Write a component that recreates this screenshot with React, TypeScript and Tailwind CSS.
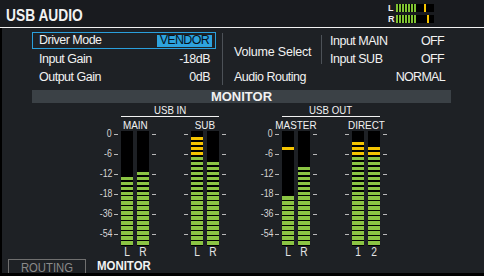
const segs = Array.from({ length: 23 }, (_, i) => i);
const scale = ["0", "-6", "-12", "-18", "-36", "-54"];

type Level = { from: number; peak?: number };

const Bar = ({ from, peak }: Level) => (
  <div className="flex h-[115px] w-[12px] flex-col bg-black pt-[0.7px]">
    {segs.map((i) => {
      const lit = i >= from || i === peak;
      const color = !lit ? "bg-black" : i <= 4 ? "bg-[#f5c400]" : "bg-[#8bc443]";
      return <div key={i} className={`mb-[1.6px] h-[3.4px] shrink-0 ${color}`} />;
    })}
  </div>
);

const Ticks = () => (
  <div className="-mt-[7px] flex flex-col">
    {scale.map((s) => (
      <div key={s} className="h-[20px] w-[4px]">
        <div className="mt-[10px] h-px w-[4px] bg-[#b8b8b8]" />
      </div>
    ))}
  </div>
);

type PairProps = { name: string; chans: string[]; levels: Level[] };

const Pair = ({ name, chans, levels }: PairProps) => (
  <div className="flex flex-col">
    <div className="ml-[7px] flex h-[12px] w-[28px] justify-center text-[11.5px] leading-[12px] whitespace-nowrap">
      <span className="inline-block scale-x-[0.86]">{name}</span>
    </div>
    <div className="flex">
      <Ticks />
      <div className="ml-[3px] flex gap-[4px]">
        <Bar {...levels[0]} />
        <Bar {...levels[1]} />
      </div>
      <div className="ml-[3px]">
        <Ticks />
      </div>
    </div>
    <div className="ml-[7px] flex gap-[4px] text-[12px] leading-[12px] text-[#e6e6e6]">
      {chans.map((c) => (
        <span key={c} className="inline-block w-[12px] scale-x-[0.85] text-center">
          {c}
        </span>
      ))}
    </div>
  </div>
);

const Group = ({ title, children }: { title: string; children: React.ReactNode }) => (
  <div className="flex">
    <div className="mt-[21px] mr-[2px] flex w-[20px] flex-col text-[10px] text-[#d4d4d4]">
      {scale.map((s) => (
        <div key={s} className="flex h-[20px] justify-end leading-[20px]">
          <span className="inline-block origin-right scale-x-[0.88]">{s}</span>
        </div>
      ))}
    </div>
    <div className="flex flex-col">
      <div className="mx-[7px] mt-px flex h-[13px] justify-center border-b border-[#f2f2f2] text-[11.5px] leading-[12px]">
        <span className="inline-block scale-x-[0.84]">{title}</span>
      </div>
      <div className="mt-[2px] flex gap-[28px]">{children}</div>
    </div>
  </div>
);

const MiniRow = ({ ch, peak }: { ch: string; peak: string }) => (
  <div className="flex h-[8px] items-center">
    <span className="w-[8px] text-[9px] font-bold leading-[8px]">{ch}</span>
    <div className="flex h-[8px] w-[38px] bg-black">
      {[0, 1, 2, 3, 4, 5, 6].map((i) => (
        <div key={i} className="mr-[1px] h-full w-[2px] bg-[#7fc232]" />
      ))}
      <div className={`h-full w-[2px] bg-[#f5c400] ${peak}`} />
    </div>
  </div>
);

const Row = ({ label, value }: { label: string; value: string }) => (
  <div className="flex h-[18px] items-center justify-between pl-[7px] pr-[6px]">
    <span>{label}</span>
    <span className="tracking-[-0.5px]">{value}</span>
  </div>
);

export default function App() {
  return (
    <div className="flex h-[276px] w-[484px] flex-col overflow-hidden bg-[#1e2125] font-['Liberation_Sans',sans-serif] text-[12.5px] text-[#f2f2f2]">
      <div className="flex h-[28px] shrink-0 justify-between border-b border-[#f2f2f2] bg-[#191b1f] pr-[50px]">
        <div className="pt-[7px] pl-[6px] text-[17px] leading-[17px] font-bold">
          <span className="inline-block origin-left scale-x-[0.81] whitespace-nowrap">USB AUDIO</span>
        </div>
        <div className="flex flex-col gap-[3px] pt-[4px]">
          <MiniRow ch="L" peak="ml-[7px]" />
          <MiniRow ch="R" peak="ml-[10px]" />
        </div>
      </div>

      <div className="flex flex-1 flex-col border-l-2 border-black">
        <div className="flex h-[58px] pt-[4px] pl-[30px] tracking-[-0.5px]">
          <div className="flex w-[184px] flex-col">
            <div className="flex h-[17px] items-center justify-between border border-[#2a9fdc] pl-[6px] pr-[3px]">
              <span>Driver Mode</span>
              <span className="flex h-[12px] w-[55px] items-center justify-end bg-[#2ea3de] pr-[3px] tracking-[-0.7px] text-[#07131d]">
                VENDOR
              </span>
            </div>
            <div className="mt-px">
              <Row label="Input Gain" value="-18dB" />
            </div>
            <Row label="Output Gain" value="0dB" />
          </div>
          <div className="mt-px ml-[6px] h-[52px] w-px bg-[#4c5157]" />
          <div className="flex w-[222px] flex-col pl-[11px]">
            <div className="flex h-[36px]">
              <div className="flex w-[87px] items-center pt-[4px] tracking-[-0.2px]">Volume Select</div>
              <div className="mt-[3px] h-[29px] w-px bg-[#4c5157]" />
              <div className="flex w-[122px] flex-col pl-[8px]">
                <div className="flex h-[18px] items-center justify-between">
                  <span>Input MAIN</span>
                  <span className="tracking-[-0.7px]">OFF</span>
                </div>
                <div className="flex h-[18px] items-center justify-between">
                  <span>Input SUB</span>
                  <span className="tracking-[-0.7px]">OFF</span>
                </div>
              </div>
            </div>
            <div className="flex h-[18px] items-center justify-between">
              <span>Audio Routing</span>
              <span className="tracking-[-0.7px]">NORMAL</span>
            </div>
          </div>
        </div>

        <div className="mt-[4px] ml-[30px] flex h-[13px] w-[419px] items-center justify-center bg-[#3b4146] text-[13px] leading-[13px] font-bold">
          MONITOR
        </div>

        <div className="flex h-[155px] pl-[90px]">
          <Group title="USB IN">
            <Pair name="MAIN" chans={["L", "R"]} levels={[{ from: 9 }, { from: 8 }]} />
            <Pair name="SUB" chans={["L", "R"]} levels={[{ from: 1 }, { from: 6 }]} />
          </Group>
          <div className="w-[27px]" />
          <Group title="USB OUT">
            <Pair name="MASTER" chans={["L", "R"]} levels={[{ from: 13, peak: 3 }, { from: 7 }]} />
            <Pair name="DIRECT" chans={["1", "2"]} levels={[{ from: 2 }, { from: 3 }]} />
          </Group>
        </div>

        <div className="mt-px flex h-[14px] items-end">
          <div className="ml-[6px] flex h-[14px] w-[78px] items-center justify-center border-x border-t border-[#6f6f6f] pt-px text-[13px] leading-[13px] text-[#8a8a8a]">
            <span className="inline-block scale-x-[0.87]">ROUTING</span>
          </div>
          <div className="ml-[11px] text-[13px] leading-[14px] font-bold">
            <span className="inline-block origin-left scale-x-[0.88]">MONITOR</span>
          </div>
        </div>
        <div className="mt-auto h-[3px] bg-black" />
      </div>
    </div>
  );
}
